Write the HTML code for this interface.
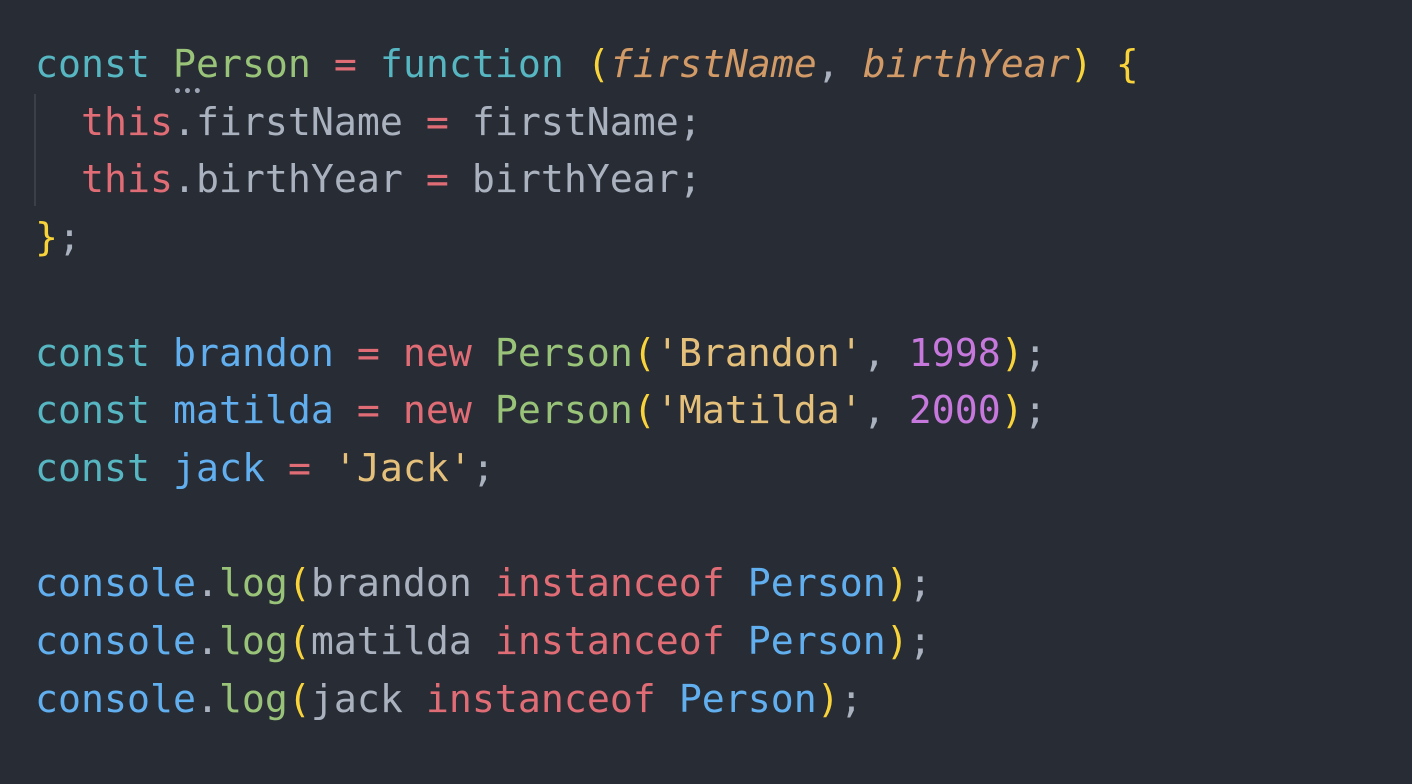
<!DOCTYPE html>
<html><head><meta charset="utf-8"><style>
html,body{margin:0;padding:0;background:#282c34;width:1412px;height:784px;overflow:hidden}
pre{margin:0;position:absolute;left:35px;top:37px;font-family:"DejaVu Sans Mono","Liberation Mono",monospace;font-size:38.2px;line-height:57.7px;color:#abb2bf}
.k{color:#56b6c2}.g{color:#98c379}.r{color:#e06c75}.o{color:#d19a66;font-style:italic}
.y{color:#f8d33a}.s{color:#e5c07b}.n{color:#c678dd}.b{color:#61afef}.p{color:#abb2bf}
.guide{position:absolute;left:34px;top:94px;width:2px;height:112px;background:#3b4048}
.dots{position:absolute;left:173px;top:84px;font:bold 14px "DejaVu Sans",sans-serif;color:#9da5b4;letter-spacing:1px}
</style></head><body>
<div class="guide"></div>
<div class="dots">•••</div>
<pre><span class="k">const</span> <span class="g">Person</span> <span class="r">=</span> <span class="k">function</span> <span class="y">(</span><span class="o">firstName</span>, <span class="o">birthYear</span><span class="y">)</span> <span class="y">{</span>
  <span class="r">this</span>.firstName <span class="r">=</span> firstName;
  <span class="r">this</span>.birthYear <span class="r">=</span> birthYear;
<span class="y">}</span>;

<span class="k">const</span> <span class="b">brandon</span> <span class="r">=</span> <span class="r">new</span> <span class="g">Person</span><span class="y">(</span><span class="s">'Brandon'</span>, <span class="n">1998</span><span class="y">)</span>;
<span class="k">const</span> <span class="b">matilda</span> <span class="r">=</span> <span class="r">new</span> <span class="g">Person</span><span class="y">(</span><span class="s">'Matilda'</span>, <span class="n">2000</span><span class="y">)</span>;
<span class="k">const</span> <span class="b">jack</span> <span class="r">=</span> <span class="s">'Jack'</span>;

<span class="b">console</span>.<span class="g">log</span><span class="y">(</span>brandon <span class="r">instanceof</span> <span class="b">Person</span><span class="y">)</span>;
<span class="b">console</span>.<span class="g">log</span><span class="y">(</span>matilda <span class="r">instanceof</span> <span class="b">Person</span><span class="y">)</span>;
<span class="b">console</span>.<span class="g">log</span><span class="y">(</span>jack <span class="r">instanceof</span> <span class="b">Person</span><span class="y">)</span>;</pre>
</body></html>
